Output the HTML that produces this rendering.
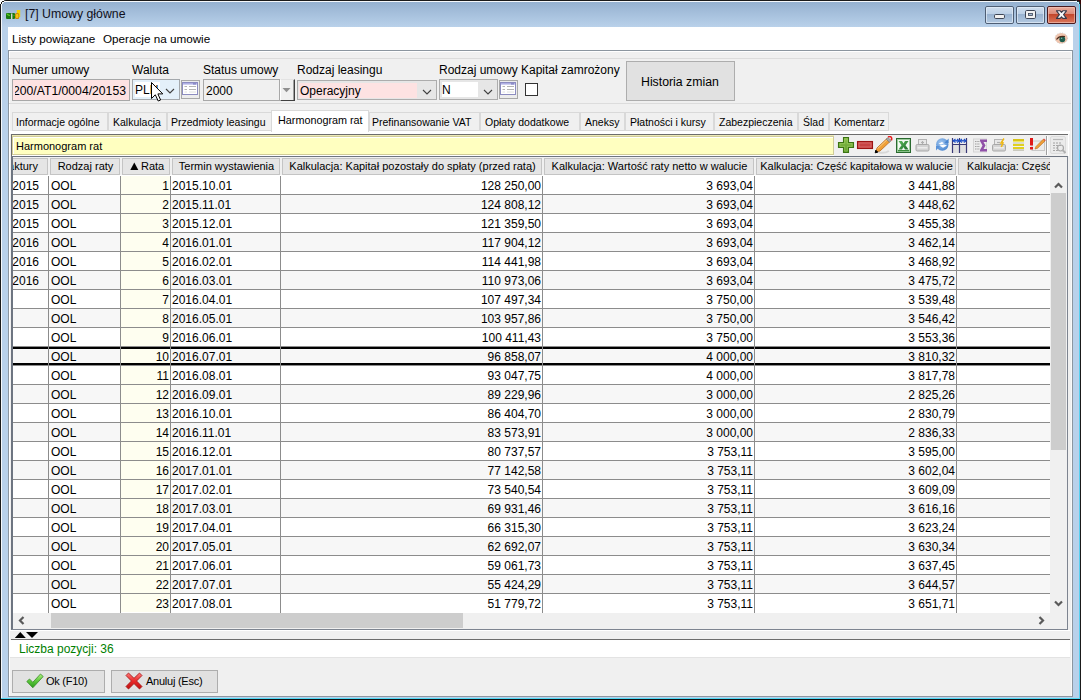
<!DOCTYPE html>
<html><head><meta charset="utf-8">
<style>
*{box-sizing:border-box;margin:0;padding:0}
html,body{width:1081px;height:700px;overflow:hidden;background:#b9d1ea}
body{position:relative;font-family:"Liberation Sans",sans-serif;font-size:12px;color:#000}
.a{position:absolute}
.t{position:absolute;white-space:pre;line-height:1}
.d{font-size:12px;color:#000}
.lbl{font-size:12px;color:#000}
.tab{position:absolute;top:112px;height:19px;background:#f0f0f0;border:1px solid #d9d9d9;font-size:10.5px;line-height:19px;padding-left:4px;white-space:pre;color:#000}
.hd{position:absolute;top:158px;height:17px;background:#e5e5e5;border:1px solid #c4c4c4;font-size:11px;white-space:pre;overflow:hidden}
.cb{position:absolute;top:6px;height:18px;border:1px solid #6a7b90;border-radius:3px;background:linear-gradient(#d4e2f1 0,#c3d5ea 50%,#a9c0dc 51%,#bcd1e8 100%)}
.ic{position:absolute;top:137px;width:17px;height:17px}
</style></head><body>
<!-- outer frame -->
<div class="a" style="left:0;top:0;width:1081px;height:700px;border-top-left-radius:6px;border-top-right-radius:6px;background:linear-gradient(#1a1a1a 0,#1a1a1a 1px,#f5f8fb 1px,#f5f8fb 2px,#95b1d0 2px,#b9d1ea 27px,#b9d1ea 100%)"></div>
<div class="a" style="left:0;top:0;width:1px;height:700px;background:#1a1a1a"></div>
<div class="a" style="left:1px;top:1px;width:1px;height:699px;background:#f5f8fb"></div>
<div class="a" style="left:1080px;top:0;width:1px;height:700px;background:#1a1a1a"></div>
<div class="a" style="left:1079px;top:2px;width:1px;height:698px;background:#5ad0f0"></div>
<div class="a" style="left:1px;top:698px;width:1079px;height:1px;background:#50d8f4"></div><div class="a" style="left:0;top:699px;width:1081px;height:1px;background:#101010"></div>
<!-- corners -->
<div class="a" style="left:0;top:0;width:4px;height:1px;background:#fff"></div>
<div class="a" style="left:0;top:1px;width:2px;height:1px;background:#fff"></div>
<div class="a" style="left:0;top:2px;width:1px;height:2px;background:#fff"></div>
<div class="a" style="left:2px;top:1px;width:2px;height:1px;background:#1a1a1a"></div>
<div class="a" style="left:1px;top:2px;width:1px;height:2px;background:#1a1a1a"></div>
<div class="a" style="left:2px;top:2px;width:2px;height:1px;background:#eef4fa"></div>
<div class="a" style="left:2px;top:3px;width:1px;height:1px;background:#eef4fa"></div>
<div class="a" style="left:1077px;top:0;width:4px;height:1px;background:#380808"></div>
<div class="a" style="left:1079px;top:1px;width:2px;height:1px;background:#380808"></div>
<div class="a" style="left:1080px;top:2px;width:1px;height:2px;background:#380808"></div>
<div class="a" style="left:1077px;top:1px;width:2px;height:1px;background:#1a3a40"></div>
<div class="a" style="left:1079px;top:2px;width:1px;height:2px;background:#1a3a40"></div>
<div class="a" style="left:1077px;top:2px;width:2px;height:1px;background:#c8f4fc"></div>
<div class="a" style="left:1078px;top:3px;width:1px;height:1px;background:#c8f4fc"></div>
<!-- title -->
<svg class="a" style="left:6px;top:9px" width="15" height="11" viewBox="0 0 15 11">
<rect x="0" y="4" width="9" height="6" rx="1" fill="#1c7a12"/><path d="M1 5 Q2.5 6.5 4 6.5" stroke="#5ccc22" stroke-width="1.2" fill="none"/><path d="M7.5 6 L8.5 7" stroke="#4cb820" stroke-width="1"/>
<rect x="5" y="4.5" width="1.4" height="5.5" fill="#d4d4d4"/>
<rect x="10.8" y="1" width="3.4" height="7" fill="#f6d000"/>
<rect x="9" y="4" width="4.2" height="6" rx="1.6" fill="#c88a00"/><rect x="9.8" y="5" width="2.6" height="4" rx="1" fill="#f0c418"/>
</svg>
<div class="t" style="left:25px;top:8px;font-size:12.3px;color:#101020">[7] Umowy główne</div>
<svg class="a" style="left:985px;top:6px" width="91" height="18" viewBox="0 0 91 18">
<defs>
<linearGradient id="gb" x1="0" y1="0" x2="0" y2="1"><stop offset="0" stop-color="#d0deee"/><stop offset="0.43" stop-color="#bcd0e6"/><stop offset="0.45" stop-color="#98b2d0"/><stop offset="1" stop-color="#b4cae2"/></linearGradient>
<linearGradient id="gr" x1="0" y1="0" x2="0" y2="1"><stop offset="0" stop-color="#ecb0a0"/><stop offset="0.43" stop-color="#dc8a78"/><stop offset="0.45" stop-color="#c2452a"/><stop offset="1" stop-color="#dc7a5e"/></linearGradient>
</defs>
<rect x="0.5" y="0.5" width="28" height="17" rx="1.5" fill="url(#gb)" stroke="#4e5e74"/>
<rect x="1.5" y="1.5" width="26" height="15" rx="0.5" fill="none" stroke="#e4eef8" stroke-opacity="0.7"/>
<rect x="9.5" y="8.5" width="10" height="4" rx="1.2" fill="#f2f2f2" stroke="#3e4656"/>
<rect x="31.5" y="0.5" width="28" height="17" rx="1.5" fill="url(#gb)" stroke="#4e5e74"/>
<rect x="32.5" y="1.5" width="26" height="15" rx="0.5" fill="none" stroke="#e4eef8" stroke-opacity="0.7"/>
<rect x="40.5" y="4.5" width="10" height="8" rx="1.2" fill="#f2f2f2" stroke="#3e4656"/>
<rect x="43.5" y="7.5" width="4" height="2" fill="#a8bcd4" stroke="#3e4656" stroke-width="0.8"/>
<rect x="62.5" y="0.5" width="28" height="17" rx="1.5" fill="url(#gr)" stroke="#4a1a1e"/>
<rect x="63.5" y="1.5" width="26" height="15" rx="0.5" fill="none" stroke="#f4c8bc" stroke-opacity="0.6"/>
<path d="M71.5 4.8 L75.2 4.8 L76.5 6.4 L77.8 4.8 L81.5 4.8 L78.6 8.6 L81.5 12.4 L77.8 12.4 L76.5 10.8 L75.2 12.4 L71.5 12.4 L74.4 8.6 Z" fill="#f6f6f6" stroke="#363848" stroke-width="1.1" stroke-linejoin="round"/>

</svg>
<!-- client -->
<div class="a" style="left:8px;top:27px;width:1065px;height:670px;background:#f0f0f0"></div>
<div class="a" style="left:8px;top:27px;width:1065px;height:23px;background:#fff"></div>
<div class="t" style="left:12px;top:33px;font-size:11.7px">Listy powiązane</div>
<div class="t" style="left:103px;top:33px;font-size:11.7px">Operacje na umowie</div>
<!-- eye -->
<svg class="a" style="left:1054px;top:32px" width="15" height="13" viewBox="0 0 15 13"><ellipse cx="7.3" cy="6.2" rx="6.3" ry="5.3" fill="#f0c4ae"/><ellipse cx="7.3" cy="6.2" rx="6.3" ry="5.3" fill="none" stroke="#b8c0bc" stroke-width="0.6" stroke-dasharray="1 1.5"/><ellipse cx="8.3" cy="7.3" rx="2.9" ry="3" fill="#1e5c4c"/><circle cx="7.6" cy="6.2" r="0.8" fill="#8ab8b0"/><path d="M2.5 7.5 Q5 3.5 11 4.5" fill="none" stroke="#4a2c1c" stroke-width="1.2"/></svg>
<div class="a" style="left:8px;top:50px;width:1065px;height:1px;background:#8c96a0"></div>
<div class="a" style="left:8px;top:50px;width:1px;height:647px;background:#8c96a0"></div>
<div class="a" style="left:1072px;top:50px;width:1px;height:647px;background:#8c96a0"></div>
<div class="a" style="left:8px;top:696px;width:1065px;height:1px;background:#8c96a0"></div>
<div class="a" style="left:9px;top:51px;width:1063px;height:1px;background:#fff"></div>
<div class="a" style="left:9px;top:51px;width:1px;height:645px;background:#fff"></div><div class="a" style="left:1071px;top:51px;width:1px;height:645px;background:#fafafa"></div>
<!-- form header panel lines -->
<div class="a" style="left:9px;top:58px;width:1062px;height:1px;background:#dcdcdc"></div>
<div class="a" style="left:9px;top:103px;width:1062px;height:1px;background:#dcdcdc"></div>
<!-- labels -->
<div class="t lbl" style="left:12px;top:64px">Numer umowy</div>
<div class="t lbl" style="left:132px;top:64px">Waluta</div>
<div class="t lbl" style="left:203px;top:64px">Status umowy</div>
<div class="t lbl" style="left:297px;top:64px">Rodzaj leasingu</div>
<div class="t lbl" style="left:439px;top:64px">Rodzaj umowy</div>
<div class="t lbl" style="left:521px;top:64px">Kapitał zamrożony</div>
<!-- inputs -->
<div class="a" style="left:12px;top:79px;width:118px;height:22px;background:#fde2e2;border:1px solid #a8a8a8;overflow:hidden">
 <div class="t" style="left:0px;top:5px;font-size:12.2px">200/AT1/0004/20153</div><div class="a" style="left:0;top:0;width:2px;height:20px;background:#fde2e2"></div></div>
<div class="a" style="left:132px;top:79px;width:48px;height:21px;background:#e4f0fa;border:1px solid #a4a8ac">
 <div class="a" style="left:2px;top:2px;width:25px;height:15px;background:#fff"></div>
 <div class="t" style="left:2px;top:4px;font-size:12px">PLN</div>
 <svg class="a" style="left:32px;top:8px" width="10" height="6" viewBox="0 0 10 6"><path d="M1 1 L5 5 L9 1" fill="none" stroke="#404040" stroke-width="1.1"/></svg>
</div>
<!-- cursor -->
<svg class="a" style="left:151px;top:82px" width="13" height="20" viewBox="0 0 13 20"><path d="M0.5 0.5 L0.5 16.5 L4.3 12.8 L7.2 19 L9.6 18 L6.9 11.9 L11.8 11.9 Z" fill="#fff" stroke="#000" stroke-width="1" stroke-linejoin="miter"/></svg>
<!-- table icon -->
<svg class="a" style="left:181px;top:80px" width="19" height="19" viewBox="0 0 19 19"><rect x="0.5" y="0.5" width="18" height="18" fill="#ececec" stroke="#a8a8a8"/><rect x="1.5" y="2.5" width="15" height="12" fill="#fff" stroke="#8c8cc0"/><rect x="2" y="3" width="14" height="1.6" fill="#b0b0e4"/><rect x="12" y="3" width="3" height="1.6" fill="#8c8cc8"/><path d="M3.5 6.5 H6 M8 6.5 H15 M3.5 9.5 H6 M8 9.5 H15" stroke="#b4b4b4" stroke-width="1"/><path d="M3.5 12 H6 M8 12 H15" stroke="#e0e0e0" stroke-width="1"/></svg>
<!-- status combo (disabled) -->
<div class="a" style="left:203px;top:79px;width:77px;height:22px;background:#f0f0f0;border:1px solid #a8a8a8"></div>
<div class="t" style="left:206px;top:85px;font-size:12px">2000</div>
<div class="a" style="left:280px;top:79px;width:15px;height:22px;background:#f0f0f0;border-top:1px solid #e3e3e3;border-left:1px solid #fff;border-right:1px solid #404040;border-bottom:1px solid #404040"></div>
<div class="a" style="left:293px;top:80px;width:1px;height:20px;background:#a0a0a0"></div>
<svg class="a" style="left:282px;top:87px" width="10" height="6" viewBox="0 0 10 6"><path d="M0.5 1 L8.5 1 L4.5 5.2 Z" fill="#909090"/></svg>
<!-- rodzaj leasingu -->
<div class="a" style="left:297px;top:80px;width:140px;height:20px;background:#e6e6e6;border:1px solid #acacac"></div>
<div class="a" style="left:299px;top:83px;width:118px;height:15px;background:#fde2e2"></div>
<div class="t" style="left:300px;top:85px;font-size:12px">Operacyjny</div>
<svg class="a" style="left:422px;top:89px" width="10" height="6" viewBox="0 0 10 6"><path d="M1 1 L5 5 L9 1" fill="none" stroke="#404040" stroke-width="1.1"/></svg>
<!-- rodzaj umowy -->
<div class="a" style="left:439px;top:79px;width:59px;height:21px;background:#e6e6e6;border:1px solid #acacac"></div>
<div class="a" style="left:442px;top:82px;width:36px;height:15px;background:#fff"></div>
<div class="t" style="left:442px;top:84px;font-size:12px">N</div>
<svg class="a" style="left:483px;top:89px" width="10" height="6" viewBox="0 0 10 6"><path d="M1 1 L5 5 L9 1" fill="none" stroke="#404040" stroke-width="1.1"/></svg>
<svg class="a" style="left:499px;top:80px" width="19" height="19" viewBox="0 0 19 19"><rect x="0.5" y="0.5" width="18" height="18" fill="#ececec" stroke="#a8a8a8"/><rect x="1.5" y="2.5" width="15" height="12" fill="#fff" stroke="#8c8cc0"/><rect x="2" y="3" width="14" height="1.6" fill="#b0b0e4"/><rect x="12" y="3" width="3" height="1.6" fill="#8c8cc8"/><path d="M3.5 6.5 H6 M8 6.5 H15 M3.5 9.5 H6 M8 9.5 H15" stroke="#b4b4b4" stroke-width="1"/><path d="M3.5 12 H6 M8 12 H15" stroke="#e0e0e0" stroke-width="1"/></svg>
<!-- checkbox -->
<div class="a" style="left:525px;top:83px;width:13px;height:13px;background:#fff;border:1px solid #333"></div>
<!-- historia zmian button -->
<div class="a" style="left:626px;top:61px;width:109px;height:40px;background:#e1e1e1;border:1px solid #adadad"></div>
<div class="t" style="left:641px;top:76px;font-size:12.3px">Historia zmian</div>
<!-- tabs -->
<div class="tab" style="left:12px;width:96px;padding-left:3px">Informacje ogólne</div>
<div class="tab" style="left:108px;width:59px">Kalkulacja</div>
<div class="tab" style="left:167px;width:105px;padding-left:3px">Przedmioty leasingu</div>
<div class="tab" style="left:369px;width:111px;padding-left:2px">Prefinansowanie VAT</div>
<div class="tab" style="left:480px;width:100px">Opłaty dodatkowe</div>
<div class="tab" style="left:580px;width:45px">Aneksy</div>
<div class="tab" style="left:625px;width:89px">Płatności i kursy</div>
<div class="tab" style="left:714px;width:84px">Zabezpieczenia</div>
<div class="tab" style="left:798px;width:31px">Ślad</div>
<div class="tab" style="left:829px;width:60px">Komentarz</div>
<!-- tab panel -->
<div class="a" style="left:10px;top:131px;width:1060px;height:3px;background:#fff"></div>
<div class="a" style="left:11px;top:134px;width:1057px;height:1px;background:#6d6d6d"></div>
<div class="tab" style="left:271px;top:110px;width:98px;height:22px;background:#fff;border-color:#d9d9d9;border-bottom:none;line-height:19px;padding-left:6px;font-size:10.8px">Harmonogram rat</div>
<div class="a" style="left:11px;top:134px;width:1px;height:496px;background:#6d6d6d"></div><div class="a" style="left:1068px;top:131px;width:1px;height:25px;background:#fff"></div>
<div class="a" style="left:12px;top:135px;width:1056px;height:21px;background:#f0f0f0"></div><div class="a" style="left:12px;top:155px;width:822px;height:1px;background:#fff"></div>
<!-- yellow field -->
<div class="a" style="left:12px;top:135px;width:822px;height:20px;background:#ffffc0;border-top:2px solid #d0cc98;border-left:1px solid #d0cc98;border-bottom:1px solid #d0cc98;border-right:1px solid #d0cc98"></div><div class="a" style="left:12px;top:135px;width:822px;height:1px;background:#eeeab8"></div>
<div class="a" style="left:13px;top:137px;width:820px;height:1px;background:#fff"></div>
<div class="a" style="left:13px;top:137px;width:1px;height:17px;background:#fff"></div>
<div class="t" style="left:16px;top:141px;font-size:11px">Harmonogram rat</div>
<!-- toolbar icons -->
<svg class="a" style="left:837px;top:136px" width="18" height="18" viewBox="0 0 18 18">
<defs><linearGradient id="gp" x1="0" y1="0" x2="0" y2="1"><stop offset="0" stop-color="#8cc04c"/><stop offset="1" stop-color="#5c9a2a"/></linearGradient></defs>
<path d="M6.5 1.5 H11.5 V6.5 H16.5 V11.5 H11.5 V16.5 H6.5 V11.5 H1.5 V6.5 H6.5 Z" fill="url(#gp)" stroke="#3c7414" stroke-width="1.1"/>
<path d="M7.7 3 H10.3 V7.7 H15 V10.3 H10.3 V15 H7.7 V10.3 H3 V7.7 H7.7 Z" fill="none" stroke="#a8d470" stroke-opacity="0.6" stroke-width="0.8"/></svg>
<svg class="a" style="left:856px;top:140px" width="18" height="10" viewBox="0 0 18 10"><rect x="1.5" y="1.5" width="15" height="7" fill="#c84444" stroke="#9c1414" stroke-width="1.1"/><rect x="3" y="3" width="12" height="4" fill="none" stroke="#e48484" stroke-width="0.8" stroke-opacity="0.7"/></svg>
<svg class="a" style="left:874px;top:136px" width="19" height="18" viewBox="0 0 19 18">
<path d="M5 16.5 Q11 17.5 15 15" stroke="#d8d8d8" stroke-width="2" fill="none"/>
<path d="M1.8 16 L3 12 L13.2 2.3 L16.3 5.3 L6 15 Z" fill="#f0a038" stroke="#b8681c" stroke-width="0.8"/>
<path d="M3.5 12.7 L13.6 3.2" stroke="#f8d08a" stroke-width="1"/>
<path d="M12.2 3.2 L14 1.5 L17.2 4.5 L15.4 6.2 Z" fill="#a8a8a8" stroke="#707070" stroke-width="0.6"/>
<path d="M14.2 1.2 Q15.6 -0.2 17 1 Q18.2 2.4 17.3 4.3" fill="none" stroke="#e82020" stroke-width="1.6"/>
<path d="M1.2 16.8 L1.8 14.2 L3.8 16.2 Z" fill="#000" stroke="#000" stroke-width="1"/></svg>
<svg class="a" style="left:896px;top:138px" width="15" height="15" viewBox="0 0 15 15">
<defs><linearGradient id="gx" x1="0" y1="0" x2="1" y2="1"><stop offset="0" stop-color="#5cb85c"/><stop offset="1" stop-color="#1e6e2a"/></linearGradient></defs>
<rect x="0.5" y="0.5" width="14" height="14" fill="#f2f8f2" stroke="#2a6a30"/>
<rect x="1.5" y="1.5" width="12" height="12" fill="none" stroke="#9ccc9c" stroke-width="1"/>
<path d="M2.5 3 H6 L7.5 5.5 L9 3 H12.5 L9.5 7.2 L12.5 11.5 H9 L7.5 9 L6 11.5 H2.5 L5.5 7.2 Z" fill="url(#gx)"/>
<rect x="2" y="12" width="11" height="1.2" fill="#3c8c3c"/></svg>
<svg class="a" style="left:915px;top:138px" width="15" height="14" viewBox="0 0 15 14">
<rect x="3.5" y="1.5" width="8" height="6" fill="#e8e8e8" stroke="#b4b4b4"/><path d="M7.5 3 V6 M6 4.5 H9" stroke="#b0b0b0" stroke-width="1.2"/>
<rect x="1" y="6.5" width="13" height="6.5" rx="1.2" fill="#d4d4d4" stroke="#a8a8a8"/><rect x="2.5" y="9" width="10" height="1.5" fill="#ececec"/></svg>
<svg class="a" style="left:935px;top:137px" width="15" height="15" viewBox="0 0 15 15">
<defs><radialGradient id="grf" cx="0.4" cy="0.35" r="0.7"><stop offset="0" stop-color="#a4c8f0"/><stop offset="1" stop-color="#4a86d0"/></radialGradient></defs>
<circle cx="7.3" cy="7.5" r="6.2" fill="url(#grf)"/>
<path d="M13.6 1.5 L13.6 6 L9.5 6 Z" fill="#4a86d0"/><path d="M1 13.5 L1 9 L5 9 Z" fill="#5a92d8"/>
<path d="M3.5 6.8 L7 5 L9 6.2 L6 7.4 Z" fill="#fff"/><path d="M4.5 8.6 L9 7.6 L12 8.6 L8 10.8 Z" fill="#fff"/></svg>
<svg class="a" style="left:951px;top:137px" width="17" height="17" viewBox="0 0 17 17">
<rect x="2" y="7" width="13" height="9" fill="#e0e0e0"/>
<path d="M1.5 1 V16 M8.5 1 V16 M15.5 1 V16" stroke="#3a3a78" stroke-width="1.2"/>
<path d="M1.5 7.5 H15.5" stroke="#3a3a78" stroke-width="1"/>
<path d="M2 3.8 H15" stroke="#1e50c8" stroke-width="1.4"/>
<path d="M4.5 2 L2.2 3.8 L4.5 5.6 M6 2 L8.2 3.8 L6 5.6 M11 2 L8.8 3.8 L11 5.6 M12.8 2 L15 3.8 L12.8 5.6" fill="none" stroke="#1e50c8" stroke-width="1.1"/></svg>
<svg class="a" style="left:973px;top:138px" width="15" height="15" viewBox="0 0 15 15">
<rect x="0.5" y="1" width="13" height="13" fill="#ececec" stroke="#d4d4d4"/>
<path d="M2 3.5 H7 M2 6 H7 M2 8.5 H7 M2 11 H7" stroke="#a0a0a0" stroke-width="1" stroke-dasharray="1.5 0.8"/>
<path d="M7 1.5 H14 V4 H10.5 L12.5 7.5 L10.5 11 H14 V13.5 H7 V12 L9.5 7.5 L7 3 Z" fill="#9050a8"/></svg>
<svg class="a" style="left:992px;top:138px" width="14" height="14" viewBox="0 0 14 14">
<rect x="2.5" y="1.5" width="8" height="6" fill="#e8e8e8" stroke="#b4b4b4"/><path d="M5 4.5 H8" stroke="#b0b0b0" stroke-width="1.2"/>
<rect x="0.5" y="6.5" width="13" height="6.5" rx="1.2" fill="#d4d4d4" stroke="#a8a8a8"/><rect x="2" y="9" width="10" height="1.5" fill="#ececec"/>
<path d="M12 0.5 L9 5 H11 L9.3 9" fill="none" stroke="#f0b810" stroke-width="1.5"/></svg>
<svg class="a" style="left:1012px;top:138px" width="13" height="14" viewBox="0 0 13 14">
<rect x="1" y="1" width="11" height="2" fill="#d8c418"/><rect x="1" y="3" width="11" height="1" fill="#f0e860"/>
<rect x="1" y="4.5" width="11" height="1" fill="#c8c8b0"/><rect x="1" y="6" width="11" height="2" fill="#e0d020"/>
<rect x="1" y="9" width="11" height="2" fill="#e0d020"/><rect x="1" y="11.5" width="11" height="1.2" fill="#b8b8a8"/></svg>
<svg class="a" style="left:1029px;top:137px" width="17" height="15" viewBox="0 0 17 15">
<rect x="3" y="4" width="12.5" height="9.5" fill="#ececec" stroke="#c8c8c8"/>
<rect x="1" y="1" width="3" height="7.5" fill="#e01818"/><rect x="1" y="10" width="3" height="2.5" fill="#e01818"/>
<path d="M6 12 L7 9.5 L14.2 2.3 L16 4 L8.6 11.2 Z" fill="#f0a038" stroke="#b8681c" stroke-width="0.6"/>
<path d="M14.2 2.3 L15 1.5 L16.8 3.2 L16 4 Z" fill="#e04040"/></svg>
<div class="a" style="left:1046px;top:136px;width:1px;height:19px;background:#a0a0a0"></div>
<div class="a" style="left:1047px;top:136px;width:1px;height:19px;background:#fff"></div>
<svg class="a" style="left:1050px;top:136px" width="17" height="19" viewBox="0 0 17 19">
<rect x="0.5" y="0.5" width="15" height="17" rx="1.5" fill="#ebebeb" stroke="#dcdcdc"/>
<path d="M3 3.5 H13" stroke="#b8b8b8" stroke-width="1.2"/><path d="M3 7 H12" stroke="#a0a0a0" stroke-width="1" stroke-dasharray="2 1"/>
<path d="M3 9.5 H12 M3 12 H9 M3 14.5 H8" stroke="#a8a8a8" stroke-width="1.1" stroke-dasharray="2 1"/>
<circle cx="10.5" cy="12" r="3" fill="none" stroke="#a8a8a8" stroke-width="1.2"/><path d="M12.5 14 L15.5 17" stroke="#b0b0b0" stroke-width="2"/></svg>
<!-- grid frame -->
<div class="a" style="left:11px;top:156px;width:1057px;height:474px;background:#f0f0f0;border-top:1px solid #6d7480;border-left:1px solid #6d7480;border-right:1px solid #7d8490;border-bottom:1px solid #7d8490"></div>

<div class="a" style="left:12px;top:175px;width:1038px;height:438px;overflow:hidden;background:#fff">
<div class="a" style="left:0;top:1px;width:1038px;height:18px;background:#fff"></div>
<div class="a" style="left:109px;top:1px;width:49px;height:18px;background:#fefef0"></div>
<div class="a" style="left:0;top:19px;width:1038px;height:1px;background:#8c8c8c"></div>
<div class="t d" style="right:1011px;top:5px">2015</div>
<div class="t d" style="left:39px;top:5px">OOL</div>
<div class="t d" style="right:881px;top:5px">1</div>
<div class="t d" style="left:160px;top:5px">2015.10.01</div>
<div class="t d" style="right:509px;top:5px">128 250,00</div>
<div class="t d" style="right:297px;top:5px">3 693,04</div>
<div class="t d" style="right:95px;top:5px">3 441,88</div>
<div class="a" style="left:0;top:20px;width:1038px;height:18px;background:#f7f7f7"></div>
<div class="a" style="left:109px;top:20px;width:49px;height:18px;background:#fefef0"></div>
<div class="a" style="left:0;top:38px;width:1038px;height:1px;background:#8c8c8c"></div>
<div class="t d" style="right:1011px;top:24px">2015</div>
<div class="t d" style="left:39px;top:24px">OOL</div>
<div class="t d" style="right:881px;top:24px">2</div>
<div class="t d" style="left:160px;top:24px">2015.11.01</div>
<div class="t d" style="right:509px;top:24px">124 808,12</div>
<div class="t d" style="right:297px;top:24px">3 693,04</div>
<div class="t d" style="right:95px;top:24px">3 448,62</div>
<div class="a" style="left:0;top:39px;width:1038px;height:18px;background:#fff"></div>
<div class="a" style="left:109px;top:39px;width:49px;height:18px;background:#fefef0"></div>
<div class="a" style="left:0;top:57px;width:1038px;height:1px;background:#8c8c8c"></div>
<div class="t d" style="right:1011px;top:43px">2015</div>
<div class="t d" style="left:39px;top:43px">OOL</div>
<div class="t d" style="right:881px;top:43px">3</div>
<div class="t d" style="left:160px;top:43px">2015.12.01</div>
<div class="t d" style="right:509px;top:43px">121 359,50</div>
<div class="t d" style="right:297px;top:43px">3 693,04</div>
<div class="t d" style="right:95px;top:43px">3 455,38</div>
<div class="a" style="left:0;top:58px;width:1038px;height:18px;background:#f7f7f7"></div>
<div class="a" style="left:109px;top:58px;width:49px;height:18px;background:#fefef0"></div>
<div class="a" style="left:0;top:76px;width:1038px;height:1px;background:#8c8c8c"></div>
<div class="t d" style="right:1011px;top:62px">2016</div>
<div class="t d" style="left:39px;top:62px">OOL</div>
<div class="t d" style="right:881px;top:62px">4</div>
<div class="t d" style="left:160px;top:62px">2016.01.01</div>
<div class="t d" style="right:509px;top:62px">117 904,12</div>
<div class="t d" style="right:297px;top:62px">3 693,04</div>
<div class="t d" style="right:95px;top:62px">3 462,14</div>
<div class="a" style="left:0;top:77px;width:1038px;height:18px;background:#fff"></div>
<div class="a" style="left:109px;top:77px;width:49px;height:18px;background:#fefef0"></div>
<div class="a" style="left:0;top:95px;width:1038px;height:1px;background:#8c8c8c"></div>
<div class="t d" style="right:1011px;top:81px">2016</div>
<div class="t d" style="left:39px;top:81px">OOL</div>
<div class="t d" style="right:881px;top:81px">5</div>
<div class="t d" style="left:160px;top:81px">2016.02.01</div>
<div class="t d" style="right:509px;top:81px">114 441,98</div>
<div class="t d" style="right:297px;top:81px">3 693,04</div>
<div class="t d" style="right:95px;top:81px">3 468,92</div>
<div class="a" style="left:0;top:96px;width:1038px;height:18px;background:#f7f7f7"></div>
<div class="a" style="left:109px;top:96px;width:49px;height:18px;background:#fefef0"></div>
<div class="a" style="left:0;top:114px;width:1038px;height:1px;background:#8c8c8c"></div>
<div class="t d" style="right:1011px;top:100px">2016</div>
<div class="t d" style="left:39px;top:100px">OOL</div>
<div class="t d" style="right:881px;top:100px">6</div>
<div class="t d" style="left:160px;top:100px">2016.03.01</div>
<div class="t d" style="right:509px;top:100px">110 973,06</div>
<div class="t d" style="right:297px;top:100px">3 693,04</div>
<div class="t d" style="right:95px;top:100px">3 475,72</div>
<div class="a" style="left:0;top:115px;width:1038px;height:18px;background:#fff"></div>
<div class="a" style="left:109px;top:115px;width:49px;height:18px;background:#fefef0"></div>
<div class="a" style="left:0;top:133px;width:1038px;height:1px;background:#8c8c8c"></div>
<div class="t d" style="left:39px;top:119px">OOL</div>
<div class="t d" style="right:881px;top:119px">7</div>
<div class="t d" style="left:160px;top:119px">2016.04.01</div>
<div class="t d" style="right:509px;top:119px">107 497,34</div>
<div class="t d" style="right:297px;top:119px">3 750,00</div>
<div class="t d" style="right:95px;top:119px">3 539,48</div>
<div class="a" style="left:0;top:134px;width:1038px;height:18px;background:#f7f7f7"></div>
<div class="a" style="left:109px;top:134px;width:49px;height:18px;background:#fefef0"></div>
<div class="a" style="left:0;top:152px;width:1038px;height:1px;background:#8c8c8c"></div>
<div class="t d" style="left:39px;top:138px">OOL</div>
<div class="t d" style="right:881px;top:138px">8</div>
<div class="t d" style="left:160px;top:138px">2016.05.01</div>
<div class="t d" style="right:509px;top:138px">103 957,86</div>
<div class="t d" style="right:297px;top:138px">3 750,00</div>
<div class="t d" style="right:95px;top:138px">3 546,42</div>
<div class="a" style="left:0;top:153px;width:1038px;height:18px;background:#fff"></div>
<div class="a" style="left:109px;top:153px;width:49px;height:18px;background:#fefef0"></div>
<div class="a" style="left:0;top:171px;width:1038px;height:1px;background:#8c8c8c"></div>
<div class="t d" style="left:39px;top:157px">OOL</div>
<div class="t d" style="right:881px;top:157px">9</div>
<div class="t d" style="left:160px;top:157px">2016.06.01</div>
<div class="t d" style="right:509px;top:157px">100 411,43</div>
<div class="t d" style="right:297px;top:157px">3 750,00</div>
<div class="t d" style="right:95px;top:157px">3 553,36</div>
<div class="a" style="left:0;top:172px;width:1038px;height:18px;background:#f7f7f7"></div>
<div class="a" style="left:109px;top:172px;width:49px;height:18px;background:#fefef0"></div>
<div class="a" style="left:0;top:190px;width:1038px;height:1px;background:#8c8c8c"></div>
<div class="t d" style="left:39px;top:176px">OOL</div>
<div class="t d" style="right:881px;top:176px">10</div>
<div class="t d" style="left:160px;top:176px">2016.07.01</div>
<div class="t d" style="right:509px;top:176px">96 858,07</div>
<div class="t d" style="right:297px;top:176px">4 000,00</div>
<div class="t d" style="right:95px;top:176px">3 810,32</div>
<div class="a" style="left:0;top:191px;width:1038px;height:18px;background:#fff"></div>
<div class="a" style="left:109px;top:191px;width:49px;height:18px;background:#fefef0"></div>
<div class="a" style="left:0;top:209px;width:1038px;height:1px;background:#8c8c8c"></div>
<div class="t d" style="left:39px;top:195px">OOL</div>
<div class="t d" style="right:881px;top:195px">11</div>
<div class="t d" style="left:160px;top:195px">2016.08.01</div>
<div class="t d" style="right:509px;top:195px">93 047,75</div>
<div class="t d" style="right:297px;top:195px">4 000,00</div>
<div class="t d" style="right:95px;top:195px">3 817,78</div>
<div class="a" style="left:0;top:210px;width:1038px;height:18px;background:#f7f7f7"></div>
<div class="a" style="left:109px;top:210px;width:49px;height:18px;background:#fefef0"></div>
<div class="a" style="left:0;top:228px;width:1038px;height:1px;background:#8c8c8c"></div>
<div class="t d" style="left:39px;top:214px">OOL</div>
<div class="t d" style="right:881px;top:214px">12</div>
<div class="t d" style="left:160px;top:214px">2016.09.01</div>
<div class="t d" style="right:509px;top:214px">89 229,96</div>
<div class="t d" style="right:297px;top:214px">3 000,00</div>
<div class="t d" style="right:95px;top:214px">2 825,26</div>
<div class="a" style="left:0;top:229px;width:1038px;height:18px;background:#fff"></div>
<div class="a" style="left:109px;top:229px;width:49px;height:18px;background:#fefef0"></div>
<div class="a" style="left:0;top:247px;width:1038px;height:1px;background:#8c8c8c"></div>
<div class="t d" style="left:39px;top:233px">OOL</div>
<div class="t d" style="right:881px;top:233px">13</div>
<div class="t d" style="left:160px;top:233px">2016.10.01</div>
<div class="t d" style="right:509px;top:233px">86 404,70</div>
<div class="t d" style="right:297px;top:233px">3 000,00</div>
<div class="t d" style="right:95px;top:233px">2 830,79</div>
<div class="a" style="left:0;top:248px;width:1038px;height:18px;background:#f7f7f7"></div>
<div class="a" style="left:109px;top:248px;width:49px;height:18px;background:#fefef0"></div>
<div class="a" style="left:0;top:266px;width:1038px;height:1px;background:#8c8c8c"></div>
<div class="t d" style="left:39px;top:252px">OOL</div>
<div class="t d" style="right:881px;top:252px">14</div>
<div class="t d" style="left:160px;top:252px">2016.11.01</div>
<div class="t d" style="right:509px;top:252px">83 573,91</div>
<div class="t d" style="right:297px;top:252px">3 000,00</div>
<div class="t d" style="right:95px;top:252px">2 836,33</div>
<div class="a" style="left:0;top:267px;width:1038px;height:18px;background:#fff"></div>
<div class="a" style="left:109px;top:267px;width:49px;height:18px;background:#fefef0"></div>
<div class="a" style="left:0;top:285px;width:1038px;height:1px;background:#8c8c8c"></div>
<div class="t d" style="left:39px;top:271px">OOL</div>
<div class="t d" style="right:881px;top:271px">15</div>
<div class="t d" style="left:160px;top:271px">2016.12.01</div>
<div class="t d" style="right:509px;top:271px">80 737,57</div>
<div class="t d" style="right:297px;top:271px">3 753,11</div>
<div class="t d" style="right:95px;top:271px">3 595,00</div>
<div class="a" style="left:0;top:286px;width:1038px;height:18px;background:#f7f7f7"></div>
<div class="a" style="left:109px;top:286px;width:49px;height:18px;background:#fefef0"></div>
<div class="a" style="left:0;top:304px;width:1038px;height:1px;background:#8c8c8c"></div>
<div class="t d" style="left:39px;top:290px">OOL</div>
<div class="t d" style="right:881px;top:290px">16</div>
<div class="t d" style="left:160px;top:290px">2017.01.01</div>
<div class="t d" style="right:509px;top:290px">77 142,58</div>
<div class="t d" style="right:297px;top:290px">3 753,11</div>
<div class="t d" style="right:95px;top:290px">3 602,04</div>
<div class="a" style="left:0;top:305px;width:1038px;height:18px;background:#fff"></div>
<div class="a" style="left:109px;top:305px;width:49px;height:18px;background:#fefef0"></div>
<div class="a" style="left:0;top:323px;width:1038px;height:1px;background:#8c8c8c"></div>
<div class="t d" style="left:39px;top:309px">OOL</div>
<div class="t d" style="right:881px;top:309px">17</div>
<div class="t d" style="left:160px;top:309px">2017.02.01</div>
<div class="t d" style="right:509px;top:309px">73 540,54</div>
<div class="t d" style="right:297px;top:309px">3 753,11</div>
<div class="t d" style="right:95px;top:309px">3 609,09</div>
<div class="a" style="left:0;top:324px;width:1038px;height:18px;background:#f7f7f7"></div>
<div class="a" style="left:109px;top:324px;width:49px;height:18px;background:#fefef0"></div>
<div class="a" style="left:0;top:342px;width:1038px;height:1px;background:#8c8c8c"></div>
<div class="t d" style="left:39px;top:328px">OOL</div>
<div class="t d" style="right:881px;top:328px">18</div>
<div class="t d" style="left:160px;top:328px">2017.03.01</div>
<div class="t d" style="right:509px;top:328px">69 931,46</div>
<div class="t d" style="right:297px;top:328px">3 753,11</div>
<div class="t d" style="right:95px;top:328px">3 616,16</div>
<div class="a" style="left:0;top:343px;width:1038px;height:18px;background:#fff"></div>
<div class="a" style="left:109px;top:343px;width:49px;height:18px;background:#fefef0"></div>
<div class="a" style="left:0;top:361px;width:1038px;height:1px;background:#8c8c8c"></div>
<div class="t d" style="left:39px;top:347px">OOL</div>
<div class="t d" style="right:881px;top:347px">19</div>
<div class="t d" style="left:160px;top:347px">2017.04.01</div>
<div class="t d" style="right:509px;top:347px">66 315,30</div>
<div class="t d" style="right:297px;top:347px">3 753,11</div>
<div class="t d" style="right:95px;top:347px">3 623,24</div>
<div class="a" style="left:0;top:362px;width:1038px;height:18px;background:#f7f7f7"></div>
<div class="a" style="left:109px;top:362px;width:49px;height:18px;background:#fefef0"></div>
<div class="a" style="left:0;top:380px;width:1038px;height:1px;background:#8c8c8c"></div>
<div class="t d" style="left:39px;top:366px">OOL</div>
<div class="t d" style="right:881px;top:366px">20</div>
<div class="t d" style="left:160px;top:366px">2017.05.01</div>
<div class="t d" style="right:509px;top:366px">62 692,07</div>
<div class="t d" style="right:297px;top:366px">3 753,11</div>
<div class="t d" style="right:95px;top:366px">3 630,34</div>
<div class="a" style="left:0;top:381px;width:1038px;height:18px;background:#fff"></div>
<div class="a" style="left:109px;top:381px;width:49px;height:18px;background:#fefef0"></div>
<div class="a" style="left:0;top:399px;width:1038px;height:1px;background:#8c8c8c"></div>
<div class="t d" style="left:39px;top:385px">OOL</div>
<div class="t d" style="right:881px;top:385px">21</div>
<div class="t d" style="left:160px;top:385px">2017.06.01</div>
<div class="t d" style="right:509px;top:385px">59 061,73</div>
<div class="t d" style="right:297px;top:385px">3 753,11</div>
<div class="t d" style="right:95px;top:385px">3 637,45</div>
<div class="a" style="left:0;top:400px;width:1038px;height:18px;background:#f7f7f7"></div>
<div class="a" style="left:109px;top:400px;width:49px;height:18px;background:#fefef0"></div>
<div class="a" style="left:0;top:418px;width:1038px;height:1px;background:#8c8c8c"></div>
<div class="t d" style="left:39px;top:404px">OOL</div>
<div class="t d" style="right:881px;top:404px">22</div>
<div class="t d" style="left:160px;top:404px">2017.07.01</div>
<div class="t d" style="right:509px;top:404px">55 424,29</div>
<div class="t d" style="right:297px;top:404px">3 753,11</div>
<div class="t d" style="right:95px;top:404px">3 644,57</div>
<div class="a" style="left:0;top:419px;width:1038px;height:18px;background:#fff"></div>
<div class="a" style="left:109px;top:419px;width:49px;height:18px;background:#fefef0"></div>
<div class="t d" style="left:39px;top:423px">OOL</div>
<div class="t d" style="right:881px;top:423px">23</div>
<div class="t d" style="left:160px;top:423px">2017.08.01</div>
<div class="t d" style="right:509px;top:423px">51 779,72</div>
<div class="t d" style="right:297px;top:423px">3 753,11</div>
<div class="t d" style="right:95px;top:423px">3 651,71</div>
<div class="a" style="left:36px;top:1px;width:1px;height:438px;background:#8c8c8c"></div>
<div class="a" style="left:108px;top:1px;width:1px;height:438px;background:#8c8c8c"></div>
<div class="a" style="left:158px;top:1px;width:1px;height:438px;background:#8c8c8c"></div>
<div class="a" style="left:268px;top:1px;width:1px;height:438px;background:#8c8c8c"></div>
<div class="a" style="left:530px;top:1px;width:1px;height:438px;background:#8c8c8c"></div>
<div class="a" style="left:742px;top:1px;width:1px;height:438px;background:#8c8c8c"></div>
<div class="a" style="left:944px;top:1px;width:1px;height:438px;background:#8c8c8c"></div>
<div class="a" style="left:0px;top:172px;width:36px;height:2px;background:#000"></div>
<div class="a" style="left:0px;top:188px;width:36px;height:2px;background:#000"></div>
<div class="a" style="left:37px;top:172px;width:71px;height:2px;background:#000"></div>
<div class="a" style="left:37px;top:188px;width:71px;height:2px;background:#000"></div>
<div class="a" style="left:109px;top:172px;width:49px;height:2px;background:#000"></div>
<div class="a" style="left:109px;top:188px;width:49px;height:2px;background:#000"></div>
<div class="a" style="left:159px;top:172px;width:109px;height:2px;background:#000"></div>
<div class="a" style="left:159px;top:188px;width:109px;height:2px;background:#000"></div>
<div class="a" style="left:269px;top:172px;width:261px;height:2px;background:#000"></div>
<div class="a" style="left:269px;top:188px;width:261px;height:2px;background:#000"></div>
<div class="a" style="left:531px;top:172px;width:211px;height:2px;background:#000"></div>
<div class="a" style="left:531px;top:188px;width:211px;height:2px;background:#000"></div>
<div class="a" style="left:743px;top:172px;width:201px;height:2px;background:#000"></div>
<div class="a" style="left:743px;top:188px;width:201px;height:2px;background:#000"></div>
<div class="a" style="left:945px;top:172px;width:93px;height:2px;background:#000"></div>
<div class="a" style="left:945px;top:188px;width:93px;height:2px;background:#000"></div>
</div>
<div class="hd" style="left:12px;width:36px"><div class="t" style="right:9px;top:2px">aktury</div></div>
<div class="hd" style="left:50px;width:70px"><div class="t" style="left:1px;right:0;text-align:center;top:2px">Rodzaj raty</div></div>
<div class="hd" style="left:122px;width:48px"><svg class="a" style="left:7px;top:3px" width="9" height="9" viewBox="0 0 9 9"><path d="M0.3 8 L4.3 0.6 L8.3 8 Z" fill="#000"/></svg><div class="t" style="left:18px;top:2px">Rata</div></div>
<div class="hd" style="left:172px;width:108px"><div class="t" style="left:1px;right:0;text-align:center;top:2px">Termin wystawienia</div></div>
<div class="hd" style="left:282px;width:260px"><div class="t" style="left:1px;right:0;text-align:center;top:2px">Kalkulacja: Kapitał pozostały do spłaty (przed ratą)</div></div>
<div class="hd" style="left:544px;width:210px"><div class="t" style="left:1px;right:0;text-align:center;top:2px">Kalkulacja: Wartość raty netto w walucie</div></div>
<div class="hd" style="left:756px;width:200px"><div class="t" style="left:1px;right:0;text-align:center;top:2px">Kalkulacja: Część kapitałowa w walucie</div></div>
<div class="hd" style="left:958px;width:92px;border-right:none"><div class="t" style="left:8px;top:2px;font-size:10.7px">Kalkulacja: Część</div></div>
<!-- vertical scrollbar -->
<div class="a" style="left:1050px;top:157px;width:17px;height:456px;background:#f0f0f0"></div>
<svg class="a" style="left:1054px;top:181px" width="9" height="8" viewBox="0 0 9 8"><path d="M1 6.5 L4.5 3 L8 6.5" fill="none" stroke="#5a5a5a" stroke-width="2.2"/></svg>
<div class="a" style="left:1051px;top:193px;width:15px;height:257px;background:#cdcdcd"></div>
<svg class="a" style="left:1054px;top:600px" width="9" height="8" viewBox="0 0 9 8"><path d="M1 1.5 L4.5 5 L8 1.5" fill="none" stroke="#5a5a5a" stroke-width="2.2"/></svg>
<!-- horizontal scrollbar -->
<div class="a" style="left:12px;top:613px;width:1055px;height:16px;background:#f0f0f0"></div>
<svg class="a" style="left:17px;top:616px" width="8" height="9" viewBox="0 0 8 9"><path d="M6.5 1 L3 4.5 L6.5 8" fill="none" stroke="#5a5a5a" stroke-width="2.2"/></svg>
<div class="a" style="left:51px;top:613px;width:412px;height:15px;background:#cdcdcd"></div>
<svg class="a" style="left:1038px;top:616px" width="8" height="9" viewBox="0 0 8 9"><path d="M1.5 1 L5 4.5 L1.5 8" fill="none" stroke="#5a5a5a" stroke-width="2.2"/></svg>
<div class="a" style="left:12px;top:157px;width:1px;height:472px;background:#6e7682"></div>
<!-- arrows -->
<div class="a" style="left:10px;top:630px;width:1060px;height:1px;background:#fff"></div><svg class="a" style="left:14px;top:631px" width="26" height="8" viewBox="0 0 26 8"><path d="M0.8 7 L6.3 1 L11.8 7 Z" fill="#000"/><path d="M12 1 L24 1 L18 7 Z" fill="#000"/></svg>
<div class="a" style="left:11px;top:639px;width:1059px;height:1px;background:#6d6d6d"></div>
<div class="a" style="left:10px;top:640px;width:1060px;height:17px;background:#fff"></div><div class="a" style="left:10px;top:657px;width:1060px;height:1px;background:#e3e3e3"></div>
<div class="t" style="left:19px;top:643px;font-size:12px;color:#008000">Liczba pozycji: 36</div>
<!-- buttons -->
<div class="a" style="left:12px;top:670px;width:93px;height:23px;background:#e1e1e1;border:1px solid #adadad"></div>
<svg class="a" style="left:26px;top:673px" width="18" height="16" viewBox="0 0 18 16">
<defs><linearGradient id="gc" x1="0" y1="0" x2="0" y2="1"><stop offset="0" stop-color="#b0f080"/><stop offset="0.5" stop-color="#5cc83c"/><stop offset="1" stop-color="#2a9a1a"/></linearGradient></defs>
<path d="M0.8 8.5 L3.5 6 L6.8 9.3 L14.5 1 L17.2 3.5 L6.8 14.8 Z" fill="url(#gc)" stroke="#3a8a2a" stroke-width="0.8" stroke-linejoin="round"/></svg>
<div class="t" style="left:46px;top:676px;font-size:11px;letter-spacing:-0.25px">Ok (F10)</div>
<div class="a" style="left:111px;top:670px;width:107px;height:23px;background:#e1e1e1;border:1px solid #adadad"></div>
<svg class="a" style="left:125px;top:672px" width="18" height="18" viewBox="0 0 18 18">
<defs><linearGradient id="gx2" x1="0" y1="0" x2="0" y2="1"><stop offset="0" stop-color="#ff7a7a"/><stop offset="0.5" stop-color="#e82828"/><stop offset="1" stop-color="#c01010"/></linearGradient></defs>
<path d="M1 3.5 L3.5 1 L9 6.3 L14.5 1 L17 3.5 L11.6 9 L17 14.5 L14.5 17 L9 11.6 L3.5 17 L1 14.5 L6.4 9 Z" fill="url(#gx2)" stroke="#a01010" stroke-width="0.8" stroke-linejoin="round"/></svg>
<div class="t" style="left:146px;top:676px;font-size:11px;letter-spacing:-0.25px">Anuluj (Esc)</div>
</body></html>
